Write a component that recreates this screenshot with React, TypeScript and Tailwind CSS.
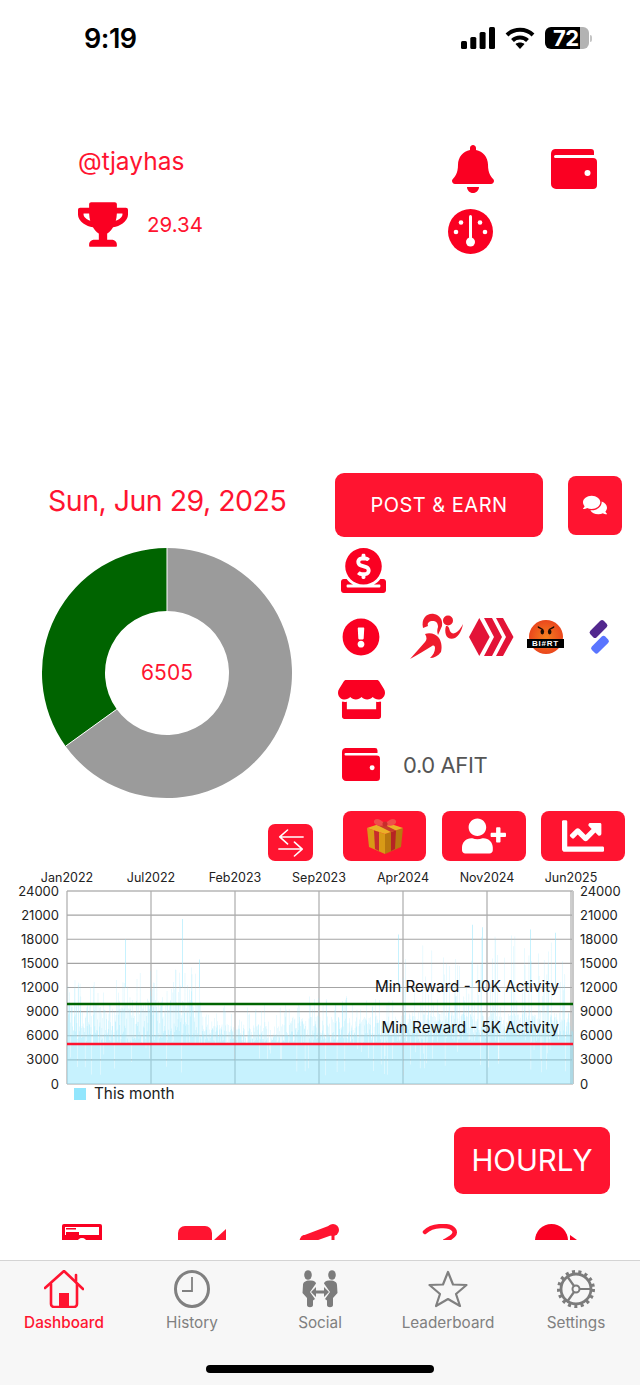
import React from "react";
import { FaBell, FaComments, FaDonate, FaExclamationCircle, FaStore, FaUserPlus, FaChartLine, FaTrophy } from "react-icons/fa";

const RED = "#fa0022";

function Wallet({ className }: { className?: string }) {
  return (
    <svg viewBox="0 0 46 40" className={className} fill={RED}>
      <path d="M4 0H40a3 3 0 0 1 3 3V6H4.500a1.500 1.500 0 0 0 0 3H42a4 4 0 0 1 4 4V36a4 4 0 0 1-4 4H5a5 5 0 0 1-5-5V5a5 5 0 0 1 4-5Z" />
      <circle cx="36.500" cy="24" r="3" fill="#fff" />
    </svg>
  );
}

function Dial({ className }: { className?: string }) {
  return (
    <svg viewBox="0 0 45 45" className={className}>
      <circle cx="22.500" cy="22.500" r="22.500" fill={RED} />
      <rect x="21" y="6" width="3" height="24" rx="1.500" fill="#fff" />
      <circle cx="22.500" cy="33" r="4.500" fill="#fff" />
      <circle cx="13" cy="13.500" r="2.300" fill="#fff" />
      <circle cx="32" cy="13.500" r="2.300" fill="#fff" />
      <circle cx="8" cy="23" r="2.300" fill="#fff" />
      <circle cx="37" cy="23" r="2.300" fill="#fff" />
    </svg>
  );
}

function Runner() {
  return (
    <svg viewBox="0 0 55 48" className="w-[55px] h-[48px]" fill="#ef1b2d">
      <circle cx="38" cy="7.500" r="5" />
      <path d="M13 15C11 5 17 0 24 1c6 1 9 6 8 12l-4 9c-1-3-1-5 0-8 0-4-2-6-5-6-4 0-6 2-5 5Z" />
      <path d="M0 46L15 29C17 27 17 24 15 21C20 19 26 21 29 25C32 30 32 35 31 39C28 43 24 45 20 45C23 42 25 39 25 35C25 33 24 32 22 33C15 37 8 42 0 46Z" />
      <path d="M36 13c3 0 3 2 4 5 1 2 3 3 5 2 3-1 6-5 8-9-1 6-4 12-8 14-4 2-8 0-9-3-1-3-1-6 0-9Z" />
    </svg>
  );
}

function Hive() {
  return (
    <svg viewBox="0 0 45 38" className="w-[45px] h-[38px]" fill="#e31337">
      <polygon points="0,19 10.300,0 20.700,19 10.300,38" />
      <polygon points="15,0 23,0 33,19 23,38 15,38 25,19" />
      <polygon points="27,0 34,0 44.500,19 34,38 27,38 37,19" />
    </svg>
  );
}

function Biirt() {
  return (
    <div className="relative w-[37px] h-[35px] flex items-center justify-center">
      <div className="w-[34px] h-[34px] rounded-full bg-[radial-gradient(circle,#f5801f,#e62f1c)] flex items-start justify-center pt-[6px]">
        <svg viewBox="0 0 22 12" className="w-[18px] h-[10px]" fill="#1c0c05">
          <path d="M1 0l7 4-1 1-6-3ZM21 0l-7 4 1 1 6-3Z" />
          <ellipse cx="6.500" cy="7" rx="2.200" ry="3.200" />
          <ellipse cx="15.500" cy="7" rx="2.200" ry="3.200" />
        </svg>
      </div>
      <div className="absolute left-0 right-0 top-[19px] h-[9px] bg-black text-white text-[8px] leading-[9px] font-bold text-center tracking-[0.8px] [font-family:'Liberation_Sans',sans-serif]">BI#RT</div>
    </div>
  );
}

function Splinter() {
  return (
    <svg viewBox="0 0 24 36" className="w-[24px] h-[36px]">
      <rect x="2" y="5.500" width="19" height="9" rx="2.500" transform="rotate(-45 11.500 10)" fill="#52288e" />
      <rect x="3.500" y="21.200" width="19" height="9" rx="2.500" transform="rotate(-45 13 25.700)" fill="#5a75ff" />
    </svg>
  );
}

function Gift() {
  return (
    <svg viewBox="0 0 38 38" className="w-[38px] h-[38px]">
      <polygon points="1,11 19,17 19,37 3,30" fill="#d89a16" />
      <polygon points="19,17 37,11 35,30 19,37" fill="#b8780f" />
      <polygon points="1,11 19,5 37,11 19,17" fill="#eab127" />
      <polygon points="8,13.500 13,15 13,34 9,32" fill="#c72c2c" />
      <polygon points="25,15 30,13.500 29,32 25,34" fill="#b62424" />
      <polygon points="11,8 16,6.500 30,13.500 25,15" fill="#c93a2c" />
      <path d="M19 7C14 1 9 1 8 4c-1 4 6 6 11 4 5 2 12 0 11-4-1-3-6-3-11 3Z" fill="#ef4f4a" />
      <circle cx="19" cy="7" r="2.500" fill="#c92c2c" />
    </svg>
  );
}

function Exchange() {
  return (
    <svg viewBox="0 0 30 32" className="w-[26px] h-[28px]" fill="none" stroke="#fff" strokeWidth="1.800" strokeLinecap="round" strokeLinejoin="round">
      <path d="M29 9H2M11 1L2 9l9 8" />
      <path d="M1 23h27M19 15l9 8-9 8" />
    </svg>
  );
}

function rng(seed: number) {
  let s = seed;
  return () => {
    s = (s * 16807) % 2147483647;
    return (s - 1) / 2147483646;
  };
}

const yOf = (v: number) => 218 - v * (193 / 24000);

function barsPath() {
  const r = rng(4242);
  const w = 0.39;
  let d = "";
  for (let x = 67; x < 573; x += w) {
    let floor = 5000;
    let mid = 8000;
    let top = 10000;
    if (x < 130) { floor = 4800; mid = 10000; top = 13000; }
    else if (x < 203) { floor = 4800; mid = 10500; top = 14500; }
    else if (x < 290) { floor = 4800; mid = 7500; top = 10000; }
    else if (x < 400) { floor = 5000; mid = 8500; top = 11000; }
    else { floor = 5200; mid = 9000; top = 18500; }
    const a = r();
    const b = r();
    let v: number;
    if (a < 0.04) v = 1000 + b * 3500;
    else if (a < 0.8) v = floor + b * (mid - floor);
    else v = mid - 1000 + Math.pow(b, 1.2) * (top - mid + 1000);
    const y = yOf(v);
    d += `M${x.toFixed(2)} ${y.toFixed(1)}h${w}V218h-${w}Z`;
  }
  for (const [sx, sv] of [[125, 18000], [182, 20500], [199, 15500], [472, 19800], [482, 19500], [530, 19200], [555, 18800], [398, 18600]]) {
    d += `M${sx} ${yOf(sv).toFixed(1)}h1V${yOf(12000).toFixed(1)}h-1Z`;
  }
  return d;
}

function Chart() {
  const yTicks = [24000, 21000, 18000, 15000, 12000, 9000, 6000, 3000, 0];
  const vx = [67, 151, 235, 319, 403, 487, 571];
  const months: [string, number][] = [["Jan2022", 67], ["Jul2022", 151], ["Feb2023", 235], ["Sep2023", 319], ["Apr2024", 403], ["Nov2024", 487], ["Jun2025", 571]];
  return (
    <svg viewBox="0 0 640 240" className="block w-[640px] h-[240px]" style={{ fontFamily: "Inter, sans-serif" }}>
      {yTicks.map((t, i) => {
        const y = 25 + i * 24.125;
        return (
          <g key={t}>
            <line x1="67" x2="573" y1={y} y2={y} stroke={i === 0 ? "#c8c8c8" : "#a4a4a4"} strokeWidth={i === 0 ? 2 : 1.200} />
            <text x="59" y={y + 4.500} textAnchor="end" fontSize="13" fill="#222">{t}</text>
            <text x="580" y={y + 4.500} fontSize="13" fill="#222">{t}</text>
          </g>
        );
      })}
      {vx.map((x) => <line key={x} x1={x} x2={x} y1="25" y2="218" stroke="#acacac" strokeWidth="1.200" />)}
      <line x1="573" x2="573" y1="25" y2="218" stroke="#c8c8c8" strokeWidth="2" />
      <path d={barsPath()} fill="#8fe6fd" fillOpacity="0.5" />
      {months.map(([m, x]) => <text key={m} x={x} y="15.500" textAnchor="middle" fontSize="12.500" fill="#222">{m}</text>)}
      <line x1="67" x2="573" y1="138" y2="138" stroke="#006400" strokeWidth="2.400" />
      <line x1="67" x2="573" y1="178" y2="178" stroke="#ff1430" strokeWidth="2.400" />
      <text x="559" y="126" textAnchor="end" fontSize="15.200" fill="#111">Min Reward - 10K Activity</text>
      <text x="559" y="167" textAnchor="end" fontSize="15.200" fill="#111">Min Reward - 5K Activity</text>
      <rect x="74" y="222" width="12" height="12" fill="#92e6fd" />
      <text x="94" y="233" fontSize="15.300" fill="#222">This month</text>
    </svg>
  );
}

function Donut() {
  const a = (234.18 * Math.PI) / 180;
  const ox = 125 + 125 * Math.sin(a), oy = 125 - 125 * Math.cos(a);
  const ix = 125 + 62 * Math.sin(a), iy = 125 - 62 * Math.cos(a);
  return (
    <div className="relative w-[250px] h-[250px]">
      <svg viewBox="0 0 250 250" className="w-[250px] h-[250px]">
        <path d={`M125 0A125 125 0 1 1 ${ox} ${oy}L${ix} ${iy}A62 62 0 1 0 125 63Z`} fill="#9b9b9b" />
        <path d={`M${ox} ${oy}A125 125 0 0 1 125 0V63A62 62 0 0 0 ${ix} ${iy}Z`} fill="#006400" />
        <line x1="125" y1="0" x2="125" y2="63" stroke="#fff" strokeWidth="1" />
        <line x1={ox} y1={oy} x2={ix} y2={iy} stroke="#fff" strokeWidth="1" />
      </svg>
      <div className="absolute inset-0 flex items-center justify-center text-[21px] text-[#ff1430]">6505</div>
    </div>
  );
}

function Tab({ label, active, children }: { label: string; active?: boolean; children: React.ReactNode }) {
  return (
    <div className="flex-1 flex flex-col items-center pt-[9px]">
      <div className="h-[38px] flex items-center justify-center">{children}</div>
      <div className={`mt-[5px] text-[15.300px] leading-[20px] ${active ? "text-[#ff1430] font-medium" : "text-[#808080]"}`}>{label}</div>
    </div>
  );
}

export default function App() {
  return (
    <div className="relative w-[640px] h-[1385px] overflow-hidden bg-white flex flex-col [font-family:Inter,'Noto_Sans',sans-serif]">
      {/* status bar */}
      <div className="h-[76px] shrink-0 flex items-center justify-between pl-[84px] pr-[48px]">
        <div className="pt-[2px] text-[27px] font-semibold text-black tracking-[-0.5px]">9:19</div>
        <div className="flex items-center gap-[10px]">
          <svg viewBox="0 0 34 22" className="w-[34px] h-[22px]" fill="#000">
            <rect x="0" y="14" width="6" height="8" rx="1.500" />
            <rect x="9.300" y="10" width="6" height="12" rx="1.500" />
            <rect x="18.600" y="5" width="6" height="17" rx="1.500" />
            <rect x="28" y="0" width="6" height="22" rx="1.500" />
          </svg>
          <svg viewBox="0 0 30 22" className="w-[30px] h-[22px]" fill="none" stroke="#000" strokeWidth="4">
            <path d="M2 8C9 1 21 1 28 8" />
            <path d="M7.500 13.500C11.500 9.500 18.500 9.500 22.500 13.500" />
            <path d="M15 22l-4.500-5c2.500-2 6.500-2 9 0Z" fill="#000" stroke="none" />
          </svg>
          <div className="relative flex items-center">
            <div className="w-[25px] h-[22px] bg-black rounded-l-[6px]" />
            <div className="w-[10px] h-[22px] bg-black" />
            <div className="w-[9px] h-[22px] bg-[#b3b3b3] rounded-r-[6px]" />
            <div className="w-[2px] h-[7px] bg-[#c4c4c4] rounded-r-sm ml-[1px]" />
            <div className="absolute left-[8px] top-0 text-white text-[22px] leading-[22px] font-bold tracking-[-0.5px]">72</div>
          </div>
        </div>
      </div>

      {/* profile */}
      <div className="h-[397px] shrink-0 pt-[64px] flex">
        <div className="pl-[78px]">
          <div className="text-[24.500px] leading-[42px] text-[#ff1430]">@tjayhas</div>
          <div className="mt-[20px] flex items-center">
            <FaTrophy color={RED} className="w-[50px] h-[45px]" />
            <span className="ml-[19px] text-[20.500px] leading-[45px] text-[#ff1430]">29.34</span>
          </div>
        </div>
        <div className="ml-auto w-[192px] pt-[5px]">
          <div className="flex items-center pl-[1px]">
            <FaBell size={48} color={RED} />
            <Wallet className="ml-[54px] w-[46px] h-[40px]" />
          </div>
          <Dial className="mt-[16px] w-[45px] h-[45px]" />
        </div>
      </div>

      {/* main */}
      <div className="h-[338px] shrink-0 flex">
        <div className="w-[335px] shrink-0">
          <div className="pl-[48px] pt-[8px] text-[28.500px] leading-[40px] tracking-[-0.5px] text-[#ff1430]">Sun, Jun 29, 2025</div>
          <div className="pl-[42px] mt-[27px]"><Donut /></div>
        </div>
        <div className="flex-1 flex flex-col items-start">
          <div className="flex items-center">
            <div className="w-[208px] h-[64px] rounded-[9px] bg-[#ff1430] flex items-center justify-center text-white text-[20px] tracking-[0.5px]">POST &amp; EARN</div>
            <div className="ml-[25px] w-[54px] h-[59px] rounded-[8px] bg-[#ff1430] flex items-center justify-center"><FaComments size={24} color="#fff" /></div>
          </div>
          <div className="mt-[11px] ml-[6px]"><FaDonate size={45} color={RED} /></div>
          <div className="mt-[20px] h-[48px] ml-[7px] flex items-center">
            <FaExclamationCircle size={38} color={RED} />
            <div className="ml-[30px]"><Runner /></div>
            <div className="ml-[4px]"><Hive /></div>
            <div className="ml-[13px]"><Biirt /></div>
            <div className="ml-[23px]"><Splinter /></div>
          </div>
          <div className="mt-[15px] ml-[3px]"><FaStore size={47} color={RED} /></div>
          <div className="mt-[24px] ml-[7px] flex items-center">
            <Wallet className="w-[38px] h-[33px]" />
            <span className="ml-[23px] pt-[2px] text-[22px] tracking-[-0.4px] text-[#555]">0.0 AFIT</span>
          </div>
        </div>
      </div>

      {/* actions */}
      <div className="h-[55px] shrink-0 flex items-start pl-[268px]">
        <div className="mt-[13px] w-[45px] h-[37px] rounded-[7px] bg-[#ff1430] flex items-center justify-center"><Exchange /></div>
        <div className="ml-[30px] w-[83px] h-[50px] rounded-[8px] bg-[#ff1430] flex items-center justify-center"><Gift /></div>
        <div className="ml-[16px] w-[84px] h-[50px] rounded-[8px] bg-[#ff1430] flex items-center justify-center"><FaUserPlus size={44} color="#fff" /></div>
        <div className="ml-[15px] w-[84px] h-[50px] rounded-[8px] bg-[#ff1430] flex items-center justify-center"><FaChartLine size={42} color="#fff" /></div>
      </div>

      <Chart />

      {/* hourly */}
      <div className="mt-[21px] self-end mr-[30px] w-[156px] h-[67px] rounded-[9px] bg-[#ff1430] flex items-center justify-center text-white text-[29.500px]">HOURLY</div>

      {/* clipped icon row */}
      <div className="mt-[30px] h-[16px] overflow-hidden shrink-0 flex items-start pl-[62px]">
        <svg viewBox="0 0 40 30" className="w-[40px] h-[30px] shrink-0" fill={RED}>
          <rect width="40" height="30" rx="2" />
          <rect x="3" y="3" width="34" height="8" fill="#fff" />
          <path d="M4 4H14V5.500H4ZM4 8H17V11H4Z" />
          <circle cx="20" cy="19" r="5" fill="#fff" />
        </svg>
        <svg viewBox="0 0 48 30" className="ml-[76px] w-[48px] h-[30px] shrink-0 mt-[2px]" fill="#ff1430">
          <path d="M0 7a7 7 0 0 1 7-7H27a7 7 0 0 1 7 7V30H0Z" />
          <path d="M36 14L48 3V30H36Z" />
        </svg>
        <svg viewBox="0 0 46 40" className="ml-[71px] w-[46px] h-[40px] shrink-0" fill="#ff1430">
          <circle cx="36" cy="6" r="6" />
          <circle cx="8" cy="16" r="5" />
          <path d="M34 1L5 12l-5 8v20h10V20L38 10Z" />
          <rect x="34.500" y="8" width="3" height="30" />
        </svg>
        <svg viewBox="0 0 36 30" className="ml-[79px] w-[36px] h-[30px] shrink-0" fill="none" stroke="#ff1430" strokeWidth="4.500" strokeLinecap="round">
          <path d="M3 8C10 1 28 0 32 6 35 11 28 14 23 17" />
        </svg>
        <svg viewBox="0 0 42 30" className="ml-[77px] w-[42px] h-[30px] shrink-0" fill={RED}>
          <path d="M0 16.500a16.500 16.500 0 0 1 33 0V30H0Z" />
          <path d="M35 11l7 5H35Z" />
        </svg>
      </div>

      {/* tab bar */}
      <div className="mt-auto h-[125px] shrink-0 bg-[#f7f7f7] border-t border-[#d4d4d4] relative flex">
        <Tab label="Dashboard" active>
          <svg viewBox="0 0 40 38" className="w-[40px] h-[38px]" fill="none" stroke="#ff1430" strokeWidth="2.600" strokeLinejoin="round" strokeLinecap="round">
            <path d="M1 18L20 1l19 18" />
            <path d="M32 11V5" />
            <path d="M7 14V34a3 3 0 0 0 3 3H30a3 3 0 0 0 3-3V14" />
            <rect x="15" y="23" width="10" height="14" fill="#ff1430" stroke="none" />
          </svg>
        </Tab>
        <Tab label="History">
          <svg viewBox="0 0 36 38" className="w-[36px] h-[38px]" fill="none" stroke="#808080">
            <ellipse cx="18" cy="19" rx="16.500" ry="17.500" strokeWidth="3" />
            <path d="M18 7V21H8" strokeWidth="1.800" />
          </svg>
        </Tab>
        <Tab label="Social">
          <svg viewBox="0 0 36 38" className="w-[36px] h-[38px]" fill="#7c7c7c">
            <ellipse cx="6" cy="5" rx="3.800" ry="4.800" />
            <ellipse cx="30" cy="5" rx="3.800" ry="4.800" />
            <path d="M1 15c0-3 3-4.500 6-4.500h2c3 0 5 1.500 5 3l-6 8.500 5 7-2 1.500V35c0 3-6 3-6 0v-7L0.500 23Z" />
            <path d="M35 15c0-3-3-4.500-6-4.500h-2c-3 0-5 1.500-5 3l6 8.500-5 7 2 1.500V35c0 3 6 3 6 0v-7l4.500-5Z" />
            <path d="M9 22l5-5v3.500h8V17l5 5-5 5v-3.500h-8V27Z" />
          </svg>
        </Tab>
        <Tab label="Leaderboard">
          <svg viewBox="0 0 40 38" className="w-[40px] h-[38px]" fill="none" stroke="#808080" strokeWidth="2.200" strokeLinejoin="round">
            <polygon points="20,2 25,14.500 38.500,15 28,24 32,36 20,29 8,36 12,24 1.500,15 15,14.500" />
          </svg>
        </Tab>
        <Tab label="Settings">
          <svg viewBox="0 0 38 38" className="w-[38px] h-[38px]" fill="none" stroke="#7c7c7c">
            <circle cx="19" cy="19" r="15" strokeWidth="2.800" />
            <circle cx="19" cy="19" r="17" strokeWidth="4" strokeDasharray="3 3.300" />
            <circle cx="19" cy="19" r="3.500" strokeWidth="2" />
            <path d="M22.500 19H34M17 16L10 6M17 22L10 32" strokeWidth="2.200" />
          </svg>
        </Tab>
        <div className="absolute left-[206px] bottom-[12px] w-[228px] h-[8px] rounded-full bg-black" />
      </div>
    </div>
  );
}
